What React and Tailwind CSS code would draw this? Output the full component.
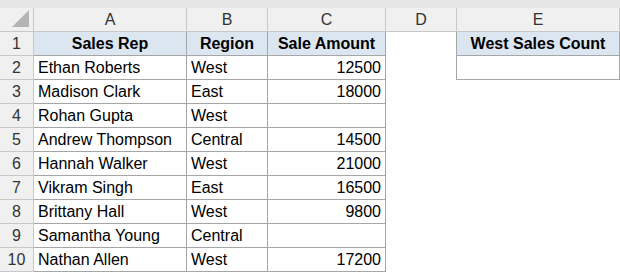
import React from "react";

const rows = [
  ["Ethan Roberts", "West", "12500"],
  ["Madison Clark", "East", "18000"],
  ["Rohan Gupta", "West", ""],
  ["Andrew Thompson", "Central", "14500"],
  ["Hannah Walker", "West", "21000"],
  ["Vikram Singh", "East", "16500"],
  ["Brittany Hall", "West", "9800"],
  ["Samantha Young", "Central", ""],
  ["Nathan Allen", "West", "17200"],
];

const cols = ["A", "B", "C", "D", "E"];

export default function App() {
  return (
    <div
      className="w-[620px] h-[273px] bg-white overflow-hidden text-black"
      style={{ fontFamily: '"Liberation Sans", Arial, sans-serif' }}
    >
      <div className="h-[8px] bg-[#e6e6e6]" />
      <div className="grid grid-cols-[34px_153px_81px_118px_71px_163px] auto-rows-[24px] text-[16px] leading-none">
        {/* header row */}
        <div className="relative bg-[#f0f0f0] border-r border-b border-[#c8c8c8]">
          <div className="absolute right-[4px] bottom-[4px] w-0 h-0 border-l-[17px] border-l-transparent border-b-[17px] border-b-[#b4b4b4]" />
        </div>
        {cols.map((c) => (
          <div
            key={c}
            className="bg-[#f0f0f0] border-r border-b border-[#c8c8c8] flex items-center justify-center text-[#333]"
          >
            {c}
          </div>
        ))}

        {/* row 1 */}
        <div className="bg-[#f0f0f0] border-r border-b border-[#c8c8c8] flex items-center justify-center text-[#333]">
          1
        </div>
        <div className="bg-[#dce6f1] border-r border-b border-[#a6a6a6] flex items-center justify-center font-bold">
          Sales Rep
        </div>
        <div className="bg-[#dce6f1] border-r border-b border-[#a6a6a6] flex items-center justify-center font-bold">
          Region
        </div>
        <div className="bg-[#dce6f1] border-r border-b border-[#a6a6a6] flex items-center justify-center font-bold">
          Sale Amount
        </div>
        <div className="bg-white" />
        <div className="bg-[#dce6f1] border-l border-r border-b border-[#a6a6a6] -ml-px flex items-center justify-center font-bold">
          West Sales Count
        </div>

        {rows.map((r, i) => (
          <React.Fragment key={i}>
            <div className="bg-[#f0f0f0] border-r border-b border-[#c8c8c8] flex items-center justify-center text-[#333]">
              {i + 2}
            </div>
            <div className="border-r border-b border-[#a6a6a6] flex items-center pl-[4px] whitespace-nowrap">
              {r[0]}
            </div>
            <div className="border-r border-b border-[#a6a6a6] flex items-center pl-[4px] whitespace-nowrap">
              {r[1]}
            </div>
            <div className="border-r border-b border-[#a6a6a6] flex items-center justify-end pr-[4px]">
              {r[2]}
            </div>
            <div className="bg-white" />
            {i === 0 ? (
              <div className="border-l border-r border-b border-[#a6a6a6] -ml-px" />
            ) : (
              <div className="bg-white" />
            )}
          </React.Fragment>
        ))}
      </div>
    </div>
  );
}
